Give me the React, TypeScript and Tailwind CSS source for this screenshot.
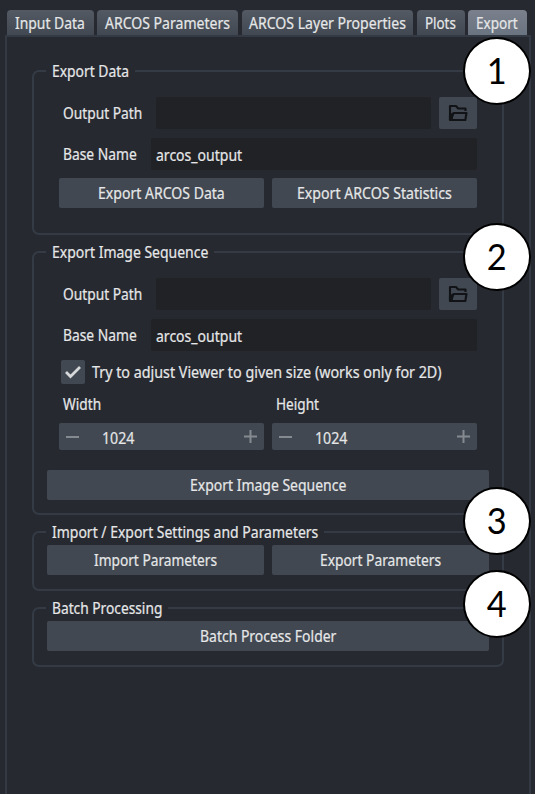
import { useLayoutEffect, useRef, useState } from "react";
import type { ReactNode } from "react";

// Text condensed horizontally to a fixed width, like the toolkit's UI font.
function Label({ children, w, className = "" }: { children: string; w: number; className?: string }) {
  const ref = useRef<HTMLSpanElement>(null);
  const [scale, setScale] = useState(1);
  useLayoutEffect(() => {
    if (ref.current) setScale(w / ref.current.offsetWidth);
  }, [w, children]);
  return (
    <span className={`block h-[22px] shrink-0 whitespace-nowrap leading-[23px] [-webkit-text-stroke:0.2px] ${className}`} style={{ width: w }}>
      <span ref={ref} className="inline-block origin-left" style={{ transform: `scaleX(${scale})` }}>
        {children}
      </span>
    </span>
  );
}

function Tab({ name, w, className }: { name: string; w: number; className: string }) {
  return (
    <div className={`flex h-[25px] items-center justify-center rounded-t-[4px] pr-[1px] ${className}`}>
      <Label w={w}>{name}</Label>
    </div>
  );
}

function Group({ title, w, badge, badgeClass, className, children }: {
  title: string; w: number; badge: string; badgeClass: string; className: string; children: ReactNode;
}) {
  return (
    <section className={`relative w-[472px] rounded-[7px] border-2 border-[#343b44] ${className}`}>
      <div className="absolute left-[12px] top-[-12px] bg-[#262930] px-[6px]">
        <Label w={w}>{title}</Label>
      </div>
      {children}
      <div className={`absolute left-[429px] z-10 flex size-[68px] items-center justify-center rounded-full border-[2.5px] border-black bg-white pb-[3px] font-[Lato,sans-serif] text-[37px] leading-none text-black ${badgeClass}`}>
        <span className="scale-x-[.93]">{badge}</span>
      </div>
    </section>
  );
}

function Button({ children, w, className }: { children: string; w: number; className: string }) {
  return (
    <button className={`flex h-[30px] items-center justify-center rounded-[2px] bg-[#414851] ${className}`}>
      <Label w={w} className="text-left">{children}</Label>
    </button>
  );
}

function FileFields() {
  return (
    <>
      <div className="flex h-[32px] items-center pl-[29px]">
        <Label w={79}>Output Path</Label>
        <div className="ml-[14px] h-[32px] w-[275px] rounded-[2px] bg-[#212226]" />
        <button className="ml-[8px] flex h-[32px] w-[38px] items-center justify-center rounded-[2px] bg-[#414851]">
          <svg width="20" height="18" viewBox="0 0 20 18" fill="none" stroke="#111316" strokeWidth="2.1" strokeLinejoin="round">
            <path d="M2 16V2h6l2.2 2.5H17.5v2.5" />
            <path d="M2.5 16 5.5 9H18.5L17.3 16Z" />
            <path d="M2 16V11.5L4.5 10 3.5 16Z" fill="#111316" />
          </svg>
        </button>
      </div>
      <div className="mt-[9px] flex h-[32px] items-center pl-[29px]">
        <Label w={74} className="mt-[-1px]">Base Name</Label>
        <div className="ml-[14px] flex h-[32px] w-[326px] items-center rounded-[2px] bg-[#212226] pl-[5px] pt-[2px]">
          <Label w={86}>arcos_output</Label>
        </div>
      </div>
    </>
  );
}

function Spin() {
  return (
    <div className="flex h-[27px] w-[205px] items-center rounded-[2px] bg-[#414851] pl-[7px] pr-[7px]">
      <div className="h-[2px] w-[13px] bg-[#858a90]" />
      <Label w={32} className="ml-[23px] mt-[3px]">1024</Label>
      <svg className="ml-auto" width="13" height="13" viewBox="0 0 13 13" stroke="#858a90" strokeWidth="2">
        <path d="M0 6.5h13M6.5 0v13" />
      </svg>
    </div>
  );
}

export default function App() {
  return (
    <div className="flex h-[794px] w-[535px] flex-col overflow-hidden bg-[#262930] pt-[10px] font-['Noto_Sans',sans-serif] text-[15.5px] text-[#e6e7e8]">
      <nav className="flex pl-[7px]">
        <Tab name="Input Data" w={70} className="w-[87px] bg-linear-to-b from-[#535a63] to-[#414851]" />
        <Tab name="ARCOS Parameters" w={125} className="ml-[3px] w-[141px] bg-linear-to-b from-[#535a63] to-[#414851]" />
        <Tab name="ARCOS Layer Properties" w={157} className="ml-[4px] w-[171px] bg-linear-to-b from-[#535a63] to-[#414851]" />
        <Tab name="Plots" w={31} className="ml-[4px] w-[48px] bg-linear-to-b from-[#535a63] to-[#414851]" />
        <Tab name="Export" w={42} className="ml-[3px] w-[59px] bg-linear-to-b from-[#7a808c] to-[#6a7380]" />
      </nav>
      <main className="ml-[5px] w-[526px] flex-1 border-2 border-b-0 border-[#343a44] pl-[25px] pt-[33px]">
        <Group title="Export Data" w={77} badge="1" badgeClass="top-[-35px]" className="h-[165px] pt-[25px]">
          <FileFields />
          <div className="mt-[8px] flex gap-[8px] pl-[25px]">
            <Button w={127} className="w-[205px]">Export ARCOS Data</Button>
            <Button w={155} className="w-[205px]">Export ARCOS Statistics</Button>
          </div>
        </Group>
        <Group title="Export Image Sequence" w={156} badge="2" badgeClass="top-[-30px]" className="mt-[16px] h-[264px] pt-[25px]">
          <FileFields />
          <div className="mt-[9px] flex h-[24px] items-center pl-[27px]">
            <div className="flex size-[24px] items-center justify-center rounded-[2px] bg-[#414851]">
              <svg width="16" height="14" viewBox="0 0 16 14" fill="none" stroke="#d6d8da" strokeWidth="2.8">
                <path d="m1 7 4.5 4.5L15 2" />
              </svg>
            </div>
            <Label w={350} className="ml-[7px]">Try to adjust Viewer to given size (works only for 2D)</Label>
          </div>
          <div className="mt-[9px] flex h-[22px] pl-[29px]">
            <Label w={38}>Width</Label>
            <Label w={43} className="ml-[175px]">Height</Label>
          </div>
          <div className="mt-[8px] flex gap-[8px] pl-[25px]">
            <Spin />
            <Spin />
          </div>
          <Button w={156} className="ml-[13px] mt-[20px] w-[442px]">Export Image Sequence</Button>
        </Group>
        <Group title="Import / Export Settings and Parameters" w={266} badge="3" badgeClass="top-[-46px]" className="mt-[16px] h-[60px] pt-[12px]">
          <div className="flex gap-[8px] pl-[13px]">
            <Button w={123} className="w-[217px]">Import Parameters</Button>
            <Button w={121} className="w-[217px]">Export Parameters</Button>
          </div>
        </Group>
        <Group title="Batch Processing" w={110} badge="4" badgeClass="top-[-39px]" className="mt-[16px] h-[60px] pt-[12px]">
          <Button w={136} className="ml-[13px] w-[442px]">Batch Process Folder</Button>
        </Group>
      </main>
    </div>
  );
}
